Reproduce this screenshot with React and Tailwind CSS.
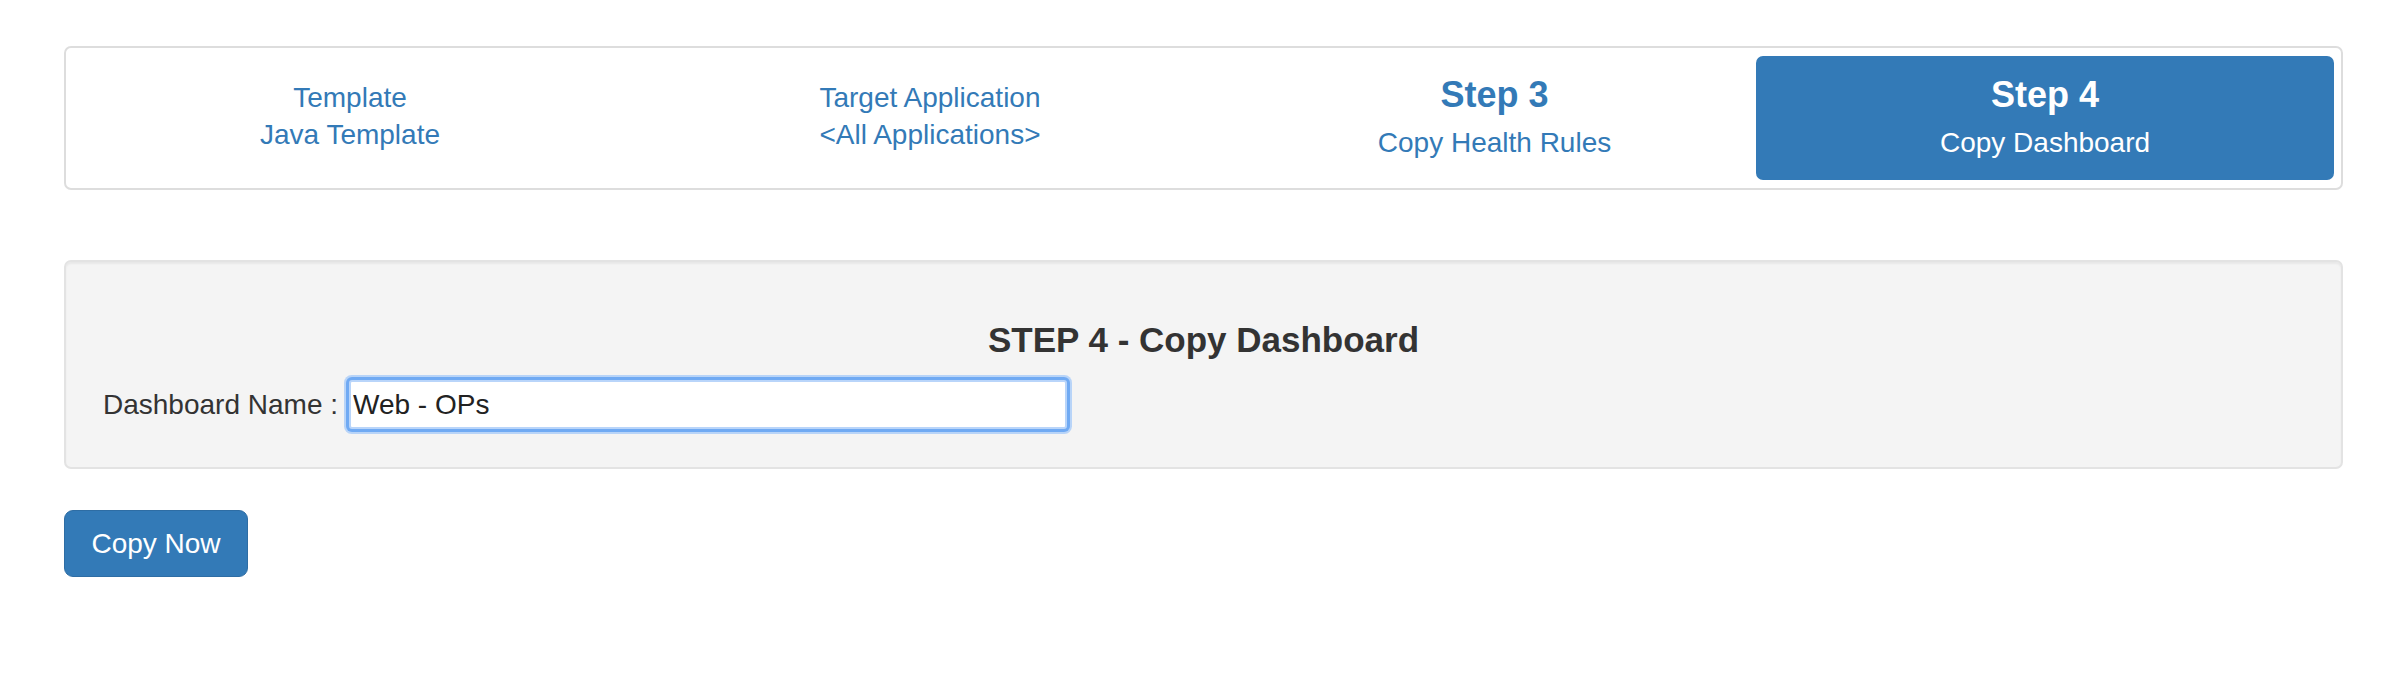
import { useState } from "react";

const steps = [
  { title: "Template", sub: "Java Template", width: "w-[554px]" },
  { title: "Target Application", sub: "<All Applications>", width: "w-[606px]" },
  { title: "Step 3", sub: "Copy Health Rules", width: "w-[523px]", big: true },
  { title: "Step 4", sub: "Copy Dashboard", width: "w-[578px]", big: true, active: true },
];

const StepTab = ({ step }) => {
  if (step.big) {
    return (
      <div
        className={`${step.width} flex flex-col items-center justify-center rounded-[7px] ${
          step.active ? "bg-[#337ab7] text-white" : "text-[#337ab7]"
        }`}
      >
        <div className="text-[36px] leading-[40px] font-bold">{step.title}</div>
        <div className="mt-[9px] text-[28px] leading-[37px]">{step.sub}</div>
      </div>
    );
  }
  return (
    <div className={`${step.width} flex flex-col items-center justify-center pb-[4px] text-[#337ab7]`}>
      <div className="text-[28px] leading-[37px]">{step.title}</div>
      <div className="text-[28px] leading-[37px]">{step.sub}</div>
    </div>
  );
};

const App = () => {
  const [name, setName] = useState("Web - OPs");

  return (
    <div className="min-h-screen bg-white pt-[46px] pl-[64px] font-['Liberation_Sans',Arial,sans-serif] text-[#333]">
      {/* wizard steps */}
      <div className="flex h-[144px] w-[2279px] rounded-[7px] border-2 border-[#dddddd] p-[8px] px-[7px]">
        {steps.map((s) => (
          <StepTab key={s.title} step={s} />
        ))}
      </div>

      {/* step form */}
      <div className="mt-[70px] w-[2279px] rounded-[7px] border-2 border-[#e3e3e3] bg-[#f4f4f4] pt-[58px] pb-[38px] shadow-[inset_0_2px_2px_rgba(0,0,0,0.05)]">
        <h3 className="text-center text-[35px] leading-[39px] font-bold text-[#333]">
          STEP 4 - Copy Dashboard
        </h3>
        <div className="mt-[21px] flex items-center pl-[37px]">
          <label className="text-[28px] leading-[37px] text-[#333]">Dashboard Name :</label>
          <input
            type="text"
            value={name}
            onChange={(e) => setName(e.target.value)}
            className="ml-[11px] h-[49px] w-[718px] rounded-[3px] border-2 border-[#b9d5fa] bg-white px-[2px] text-[28px] text-[#222] shadow-[0_0_0_3px_#70aaf3,0_0_0_5px_#b8d4f8] outline-none"
          />
        </div>
      </div>

      <button className="mt-[41px] flex h-[67px] w-[184px] items-center justify-center rounded-[9px] border border-[#2e6da4] bg-[#337ab7] text-[28px] text-white">
        Copy Now
      </button>
    </div>
  );
};

export default App;
